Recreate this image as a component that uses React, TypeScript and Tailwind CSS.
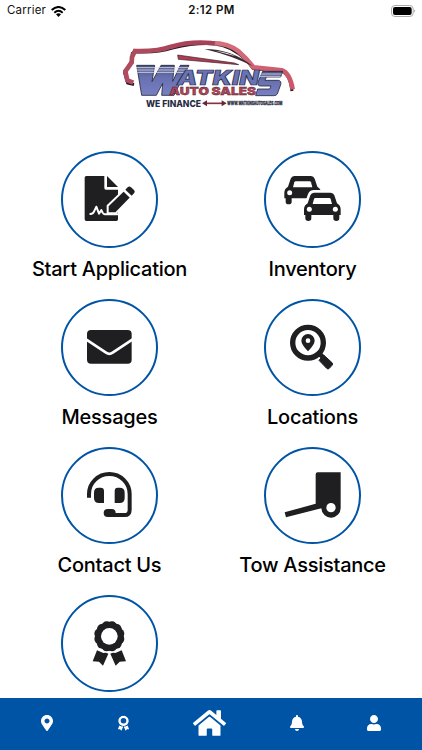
import type { ReactNode } from 'react';
import { FaBell, FaHome, FaMapMarkerAlt, FaUser } from 'react-icons/fa';

interface MenuItem {
  id: string;
  label?: string;
  icon: ReactNode;
}

const CAR =
  'M30 0H80Q88 0 91 8L99 32Q110 38 110 50V67H106V77Q106 85 97 85Q88 85 88 77V67H22V77Q22 85 13 85Q4 85 4 77V67H0V50Q0 38 11 32L19 8Q22 0 30 0Z';

// twelve small bumps around the rosette
const BUMPS = Array.from({ length: 12 }, (_, i) => {
  const a = (i * Math.PI) / 6 + Math.PI / 12;
  return { x: 84 + 32 * Math.cos(a), y: 64 + 32 * Math.sin(a) };
});

const MenuIcon = ({ children }: { children: ReactNode }) => (
  <svg viewBox="-1 0 171 171" className="h-[57px] w-[57px] shrink-0 overflow-visible" fill="#1f1f21">
    {children}
  </svg>
);

const ApplicationIcon = () => (
  <MenuIcon>
    <path d="M15 15H69V51Q69 56 74 56H110V145Q110 150 105 150H15Q10 150 10 145V20Q10 15 15 15Z" />
    <path d="M77 15L110 48H77Z" />
    <path d="M79 104L127 58L149 80L103 127H79Z" stroke="#fff" strokeWidth="6" />
    <path d="M132 56L139 49Q144 44 149 49L158 57Q163 62 158 67L151 74Z" />
    <path d="M27 129Q35 129 38 122L45 107L53 128L60 117Q65 130 71 130H109" fill="none" stroke="#fff" strokeWidth="6" strokeLinejoin="round" strokeLinecap="round" />
  </MenuIcon>
);

const Car = () => (
  <>
    <path d={CAR} />
    <path d="M34 16H76Q79 16 80 19L84 34H26L30 19Q31 16 34 16Z" fill="#fff" />
    <circle cx="16" cy="50" r="7.5" fill="#fff" />
    <circle cx="94" cy="50" r="7.5" fill="#fff" />
  </>
);

const CarsIcon = () => (
  <MenuIcon>
    <g transform="translate(0 15)"><Car /></g>
    <path d={CAR} transform="translate(59 65)" fill="#fff" stroke="#fff" strokeWidth="16" />
    <g transform="translate(59 65)"><Car /></g>
  </MenuIcon>
);

const MailIcon = () => (
  <MenuIcon>
    <rect x="17" y="33" width="134" height="101" rx="12" />
    <path d="M14 61L74 101Q84 108 94 101L154 61" fill="none" stroke="#fff" strokeWidth="8" />
  </MenuIcon>
);

const SearchPinIcon = () => (
  <MenuIcon>
    <circle cx="71" cy="71" r="46" fill="none" stroke="#1f1f21" strokeWidth="16" />
    <path d="M102 101L116 115" stroke="#1f1f21" strokeWidth="14" />
    <path d="M118 108L143 131Q147 135 143 139L135 148Q131 152 127 148L104 124Z" stroke="#1f1f21" strokeWidth="3" strokeLinejoin="round" />
    <path fillRule="evenodd" d="M71 97Q51 76 51 65A20 20 0 0 1 91 65Q91 76 71 97ZM71 58A7 7 0 1 0 71 72A7 7 0 1 0 71 58Z" />
  </MenuIcon>
);

const HeadsetIcon = () => (
  <MenuIcon>
    <path d="M23 92V81A61 60 0 0 1 145 81V128Q145 144 130 144H86" fill="none" stroke="#1f1f21" strokeWidth="12" />
    <path d="M52 62H58Q68 62 68 72V108H53Q38 108 38 93V77Q38 62 52 62Z" />
    <path d="M109 62H115Q130 62 130 77V93Q130 108 115 108H100V72Q100 62 109 62Z" />
    <rect x="67" y="126" width="36" height="24" rx="12" />
  </MenuIcon>
);

const TowIcon = () => (
  <MenuIcon>
    <path fillRule="evenodd" d="M100 16H169V122A29 29 0 0 1 111 124L5 151L1 136L94 110V22Q94 16 100 16ZM140 108A14 14 0 1 0 140 136A14 14 0 1 0 140 108Z" />
  </MenuIcon>
);

const Ribbon = () => (
  <>
    <circle cx="84" cy="64" r="34" fill="none" stroke="currentColor" strokeWidth="19" />
    {BUMPS.map((b, i) => (
      <circle key={i} cx={b.x} cy={b.y} r="14" fill="currentColor" />
    ))}
    <circle cx="84" cy="64" r="25" className="fill-(--hole)" />
    <path d="M47 106L66 114Q73 111 81 116L65 152L53 140L34 139ZM121 106L102 114Q95 111 87 116L103 152L115 140L134 139Z" fill="currentColor" />
  </>
);

const RibbonIcon = () => (
  <MenuIcon>
    <g className="text-[#1f1f21] [--hole:#fff]"><Ribbon /></g>
  </MenuIcon>
);

const MENU: MenuItem[] = [
  { id: 'apply', label: 'Start Application', icon: <ApplicationIcon /> },
  { id: 'inventory', label: 'Inventory', icon: <CarsIcon /> },
  { id: 'messages', label: 'Messages', icon: <MailIcon /> },
  { id: 'locations', label: 'Locations', icon: <SearchPinIcon /> },
  { id: 'contact', label: 'Contact Us', icon: <HeadsetIcon /> },
  { id: 'tow', label: 'Tow Assistance', icon: <TowIcon /> },
  { id: 'rewards', icon: <RibbonIcon /> },
];

function StatusBar() {
  return (
    <div className="grid h-[22px] shrink-0 grid-cols-3 items-center pr-1.5 pl-[7px] text-[11.5px] text-[#111]">
      <div className="flex items-center gap-[5px]">
        <span className="tracking-[0.2px]">Carrier</span>
        <svg viewBox="0 0 45 33" className="h-[11px] w-[15px]" fill="none" stroke="#000" strokeWidth="6">
          <path d="M2 12Q22.500 -6 43 12" />
          <path d="M10 20Q22.500 9 35 20" />
          <path d="M15 25Q22.500 19 30 25L22.500 33Z" fill="#000" stroke="none" />
        </svg>
      </div>
      <span className="text-center font-semibold tracking-[0.4px]">2:12 PM</span>
      <svg viewBox="0 0 75 36" className="h-3 w-[25px] justify-self-end">
        <rect x="1.500" y="1.500" width="65" height="33" rx="10" fill="#fff" stroke="#aaa" strokeWidth="3" />
        <rect x="6" y="6" width="56" height="24" rx="6" />
        <path d="M70 13Q75 18 70 23Z" fill="#888" />
      </svg>
    </div>
  );
}

function Logo() {
  return (
    <svg viewBox="0 0 570 240" className="h-20 w-[190px]" fontFamily="Inter, Liberation Sans, sans-serif" fontWeight="800">
      <defs>
        <linearGradient id="body" x1="0" x2="1">
          <stop offset="0" stopColor="#b04c60" />
          <stop offset="0.53" stopColor="#a84054" />
          <stop offset="0.54" stopColor="#d8707e" />
          <stop offset="1" stopColor="#c9586a" />
        </linearGradient>
        <linearGradient id="letters" x1="0" y1="0" x2="0" y2="1">
          <stop offset="0" stopColor="#4a5182" />
          <stop offset="0.4" stopColor="#6870b0" />
          <stop offset="1" stopColor="#7880c4" />
        </linearGradient>
      </defs>

      {/* car silhouette */}
      <path d="M57 149L38 144L29 114L50 78L52 55L61 50Q125 54 172 39Q245 22 300 27Q346 31 393 74L414 100L503 110Q526 120 531 168" fill="none" stroke="#241923" strokeWidth="9" />
      <path d="M55 143L37 136L31 109L50 82L51 66L60 48Q128 50 168 35Q225 18 290 24Q340 24 372 50Q395 70 416 97L500 106Q524 113 533 163" fill="none" stroke="url(#body)" strokeWidth="14" />
      <path d="M188 60L358 84L371 89L190 73Z" fill="#b13b50" stroke="#35202b" strokeWidth="2" />
      <path d="M268 42Q350 42 414 94Q355 63 268 42Z" fill="#382832" />
      <path d="M300 47Q340 52 362 64Z" fill="#fff" />

      {/* name */}
      <g fill="url(#letters)" stroke="#24263d" strokeWidth="2.500">
        <path d="M65 91H119L111 140L138 91H178L173 139L196 91H222L177 181H140L143 145L124 181H80Z" />
        <path d="M443 109H503L497 126H454L450 136H490Q500 137 497 149L487 177Q484 182 476 182H422L428 162H464L468 153H437Q425 153 430 139Z" />
      </g>
      <path d="M63 98H222M65 105H218M67 112H215M435 117H500M433 124H497" stroke="#dfe2ec" strokeWidth="2.500" />
      <text x="186" y="151" fontSize="60" fontStyle="italic" fontWeight="900" textLength="246" lengthAdjust="spacingAndGlyphs" fill="#6a72b6" stroke="#24263d" strokeWidth="2">ATKIN</text>
      <text x="163" y="181" fontSize="31" fontWeight="900" textLength="260" lengthAdjust="spacingAndGlyphs" fill="#b34459" stroke="#3b1b27" strokeWidth="1">AUTO SALES</text>
      <text x="93" y="215" fontSize="28" textLength="165" lengthAdjust="spacingAndGlyphs" fill="#262b44">WE FINANCE</text>
      <path d="M271 205H323" stroke="#8b3044" strokeWidth="5" />
      <path d="M261 205L276 196V214ZM335 205L320 196V214Z" fill="#68263a" />
      <text x="337" y="210" fontSize="14" textLength="165" lengthAdjust="spacingAndGlyphs" fill="#303348" stroke="#303348" strokeWidth="1">WWW.WATKINSAUTOSALES.COM</text>
    </svg>
  );
}

function BottomNav() {
  return (
    <nav className="flex h-[52px] shrink-0 items-center justify-between bg-[#0054a6] pr-[41px] pb-0.5 pl-[41px] text-white">
      <FaMapMarkerAlt className="h-4 w-3" />
      <svg viewBox="30 12 108 143" className="h-4 w-[13px] [--hole:#0054a6]"><Ribbon /></svg>
      <FaHome className="h-[30px] w-[33px]" />
      <FaBell className="h-4 w-3.5" />
      <FaUser className="h-4 w-3.5" />
    </nav>
  );
}

export default function App() {
  return (
    <div className="flex h-[750px] w-[422px] flex-col overflow-hidden bg-white font-['Inter','Liberation_Sans',sans-serif] text-black">
      <StatusBar />
      <header className="flex h-[129px] shrink-0 justify-center pt-[13px] pr-0.5">
        <Logo />
      </header>

      <main className="grid min-h-0 flex-1 auto-rows-[148px] grid-cols-2 overflow-hidden px-2">
        {MENU.map(item => (
          <button key={item.id} className="flex flex-col items-center">
            <span className="flex h-[97px] w-[97px] shrink-0 items-center justify-center rounded-full border-2 border-[#0054a6]">
              {item.icon}
            </span>
            {item.label && (
              <span className="mt-[7px] text-[20px] leading-7 font-[550] tracking-[-0.25px] whitespace-nowrap">
                {item.label}
              </span>
            )}
          </button>
        ))}
      </main>

      <BottomNav />
    </div>
  );
}
